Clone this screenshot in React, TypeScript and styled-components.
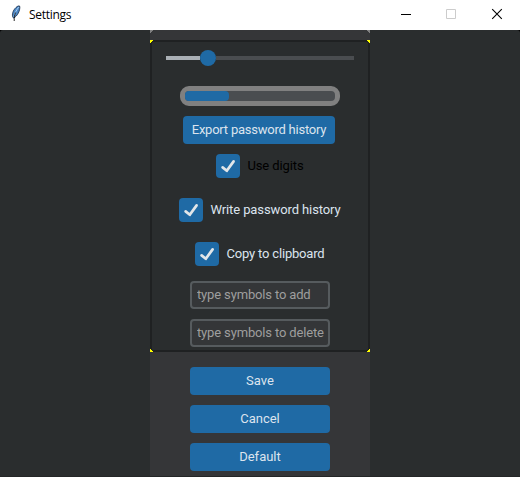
import React from 'react';
import styled, { createGlobalStyle } from 'styled-components';

const GlobalStyle = createGlobalStyle`
  * { box-sizing: border-box; }
  body { margin: 0; background: #2a2d2e; overflow: hidden; }
  button, input { font: inherit; margin: 0; }
`;

const Window = styled.div`
  width: 520px;
  height: 477px;
  display: flex;
  flex-direction: column;
  background: #000;
  font: 13px/16px Roboto, sans-serif;
  color: #dce4ee;
  overflow: hidden;
`;

const TitleBar = styled.header`
  height: 30px;
  flex: none;
  display: flex;
  align-items: center;
  background: #fff;
  color: #000;
`;

const Feather = styled.svg`
  width: 16px;
  height: 16px;
  margin: -4px 5px 0 8px;
`;

const Title = styled.span`
  flex: 1;
  font: 12px/16px 'Open Sans', 'Noto Sans', sans-serif;
  letter-spacing: -0.3px;
`;

const Control = styled.svg`
  width: 46px;
  height: 30px;
  flex: none;
`;

const Controls = styled.div`
  display: flex;
  margin-right: -1px;
`;

const Body = styled.main`
  flex: 1;
  display: flex;
  justify-content: center;
  background: #2a2d2e;
  border-radius: 3px 3px 0 0;
  border-bottom: 1px solid #242627;
`;

const Panel = styled.section`
  width: 220px;
  display: flex;
  flex-direction: column;
  background: #353638;
  position: relative;
`;

const Corner = styled.svg<{ $right?: boolean; $bottom?: boolean; $top: number }>`
  position: absolute;
  top: ${(p) => p.$top}px;
  ${(p) => (p.$right ? 'right: 0;' : 'left: 0;')}
  width: 3px;
  height: 3px;
  transform: scale(${(p) => (p.$right ? -1 : 1)}, ${(p) => (p.$bottom ? -1 : 1)});
`;

const Options = styled.div`
  height: 312px;
  margin-top: 10px;
  border: 2px solid #1f2122;
  border-radius: 3px;
  background: #2a2d2e;
  display: flex;
  flex-direction: column;
  align-items: center;
`;

const Slider = styled.div`
  width: 188px;
  height: 16px;
  margin-top: 8px;
  display: flex;
  align-items: center;
`;

const Track = styled.div<{ $active?: boolean }>`
  height: 4px;
  ${(p) => (p.$active ? 'width: 34px;' : 'flex: 1;')}
  background: ${(p) => (p.$active ? '#aab0b5' : '#4a4d50')};
`;

const Thumb = styled.div`
  width: 16px;
  height: 16px;
  border-radius: 50%;
  background: #1f6aa5;
`;

const Progress = styled.div`
  width: 160px;
  height: 20px;
  margin: 20px 0 10px;
  border: 5px solid #808080;
  border-radius: 9px;
  background: #4a4d50;
`;

const ProgressFill = styled.div`
  width: 44px;
  height: 10px;
  border-radius: 4px;
  background: #1f6aa5;
`;

const Button = styled.button`
  width: 140px;
  height: 28px;
  flex: none;
  border: 0;
  border-radius: 4px;
  padding: 0;
  background: #1f6aa5;
  color: #dce4ee;
`;

const ExportButton = styled(Button)`
  width: 152px;
  margin-right: 2px;
  letter-spacing: -0.23px;
`;

const Checks = styled.div`
  display: flex;
  flex-direction: column;
  align-items: center;
  gap: 20px;
  margin: 10px 0 15px;
`;

const Check = styled.label<{ $disabled?: boolean; $tracking: number }>`
  height: 24px;
  display: flex;
  align-items: center;
  gap: 7px;
  color: ${(p) => (p.$disabled ? '#000' : '#dce4ee')};
  letter-spacing: ${(p) => p.$tracking}px;
  white-space: nowrap;
`;

const CheckBox = styled.span`
  width: 24px;
  height: 24px;
  border-radius: 4px;
  background: #1f6aa5;
`;

const Entry = styled.input`
  width: 140px;
  height: 28px;
  flex: none;
  padding: 0 0 2px 5px;
  border: 2px solid #565b5e;
  border-radius: 4px;
  background: #343638;
  color: #dce4ee;
  letter-spacing: -0.15px;
  outline: 0;
  &::placeholder { color: #9e9e9e; opacity: 1; }
  & + & { margin-top: 10px; }
`;

const Actions = styled.div`
  display: flex;
  flex-direction: column;
  align-items: center;
  gap: 10px;
  padding-top: 15px;
`;

function CornerMark(props: { top: number; color: string; right?: boolean; bottom?: boolean }) {
  return (
    <Corner $top={props.top} $right={props.right} $bottom={props.bottom} viewBox="0 0 3 3" shapeRendering="crispEdges">
      <path d="M0 0h3v1H2v1H1v1H0z" fill={props.color} />
    </Corner>
  );
}

function Option({ label, disabled, tracking }: { label: string; disabled?: boolean; tracking: number }) {
  return (
    <Check $disabled={disabled} $tracking={tracking}>
      <CheckBox>
        <svg width="24" height="24" viewBox="0 0 24 24" fill="none" stroke="#e2e6e9" strokeWidth="2.7" strokeLinecap="round" strokeLinejoin="round">
          <path d="M6.6 13.4 10.8 16.8 17.6 7.4" />
        </svg>
      </CheckBox>
      {label}
    </Check>
  );
}

export default function App() {
  return (
    <>
      <GlobalStyle />
      <Window>
        <TitleBar>
          <Feather viewBox="0 0 16 16">
            <path d="M5 12.6C3.5 9.5 5 5.3 8 2.5 9.5 1 11 .7 11.6 1c.6 1.5 0 4.6-1.3 7.1C9 10.5 7.5 12 5.8 13z" fill="#4b86c4" stroke="#172c48" strokeWidth=".8" />
            <path d="M10.7 2C8.5 5 6.9 8 5.9 11.5" stroke="#a9d0f5" strokeWidth="1" fill="none" />
            <path d="M7.5 7.5C6.5 10 6.2 12.5 6.2 16" stroke="#111" strokeWidth=".9" fill="none" />
          </Feather>
          <Title>Settings</Title>
          <Controls>
            <Control viewBox="0 0 46 30"><path d="M18 14h10v1H18z" fill="#000" shapeRendering="crispEdges" /></Control>
            <Control viewBox="0 0 46 30"><path d="M17.5 9.5h9v9h-9z" fill="none" stroke="#ccc" /></Control>
            <Control viewBox="0 0 46 30"><path d="m17.2 9.2 9.6 9.6m0-9.6-9.6 9.6" stroke="#000" strokeWidth="1.1" /></Control>
          </Controls>
        </TitleBar>
        <Body>
          <Panel>
            <CornerMark top={0} color="#808080" />
            <CornerMark top={0} color="#808080" right />
            <Options>
              <Slider><Track $active /><Thumb /><Track /></Slider>
              <Progress><ProgressFill /></Progress>
              <ExportButton>Export password history</ExportButton>
              <Checks>
                <Option label="Use digits" tracking={-0.1} disabled />
                <Option label="Write password history" tracking={-0.1} />
                <Option label="Copy to clipboard" tracking={-0.18} />
              </Checks>
              <Entry placeholder="type symbols to add" />
              <Entry placeholder="type symbols to delete" />
            </Options>
            <CornerMark top={10} color="#ff0" />
            <CornerMark top={10} color="#ff0" right />
            <CornerMark top={319} color="#ff0" bottom />
            <CornerMark top={319} color="#ff0" right bottom />
            <Actions>
              <Button>Save</Button>
              <Button>Cancel</Button>
              <Button>Default</Button>
            </Actions>
          </Panel>
        </Body>
      </Window>
    </>
  );
}
